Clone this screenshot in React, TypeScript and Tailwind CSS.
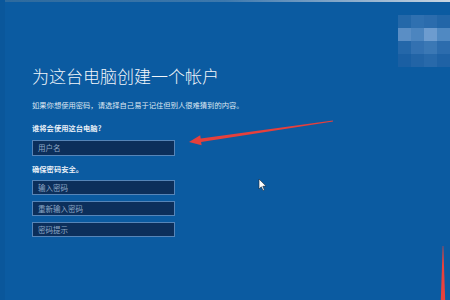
import React from "react";

const mosaic = [
  ["#2468a9", "#2f70b0", "#2b6cad", "#2266a8"],
  ["#5a8ec5", "#4c85bf", "#6d9ccf", "#5089c2"],
  ["#2467a9", "#3371b1", "#3b78b5", "#2c6cad"],
  ["#1a5fa3", "#2264a6", "#2869aa", "#1f62a5"],
];

const Field = ({ text, first }: { text: string; first?: boolean }) => (
  <div
    className={`w-[143px] ${first ? "h-[16px]" : "h-[15px]"} bg-[#0c2f5b] border border-[#5685b8] flex items-center pl-[5px] text-[7.5px] leading-none text-[#8fa8c6]`}
  >
    {text}
  </div>
);

export default function App() {
  return (
    <div className="relative w-[450px] h-[300px] overflow-hidden bg-[#0b5ba1] font-['Noto_Sans_CJK_SC',sans-serif] text-white">
      {/* top edge */}
      <div className="absolute top-0 left-0 right-0 h-[2px] bg-gradient-to-r from-[#2d6a9e] via-[#3c78ad] to-[#c9d6e2]" />
      <div className="absolute top-0 bottom-0 left-0 w-[5px] bg-[#0a579b]" />

      <div className="flex flex-col pl-[32px] pt-[66px]">
        <h1 className="text-[17px] leading-[20px] font-light text-[#f2f6fa]">为这台电脑创建一个帐户</h1>
        <p className="mt-[14px] text-[7.3px] leading-[10px] text-[#dde7f2]">
          如果你想使用密码，请选择自己易于记住但别人很难猜到的内容。
        </p>
        <p className="mt-[13px] text-[7.3px] leading-[10px] font-bold text-[#e8eff7]">谁将会使用这台电脑?</p>
        <div className="mt-[7px]">
          <Field text="用户名" first />
        </div>
        <p className="mt-[8px] text-[7.3px] leading-[10px] font-bold text-[#e8eff7]">确保密码安全。</p>
        <div className="mt-[6px] flex flex-col gap-[6px]">
          <Field text="输入密码" />
          <Field text="重新输入密码" />
          <Field text="密码提示" />
        </div>
      </div>

      {/* pixelated corner */}
      <div className="absolute left-[398px] top-[15px] grid grid-cols-4">
        {mosaic.flat().map((c, i) => (
          <div key={i} className="w-[13px] h-[13px]" style={{ backgroundColor: c }} />
        ))}
      </div>

      {/* annotation arrows and cursor */}
      <svg className="absolute inset-0" width="450" height="300" viewBox="0 0 450 300">
        <polygon
          points="332.9,120.4 200.7,138.6 200.2,135.2 189,142 201.6,145.3 201.1,142 333.1,121.6"
          fill="#e6403c"
        />
        <polygon points="442.7,246 443.3,246 445.2,300 440.8,300" fill="#e8423d" />
        <path
          d="M259 179 L259 189 L261.3 186.8 L263 190.5 L264.4 189.9 L262.8 186.3 L266 186.1 Z"
          fill="#ffffff"
          stroke="#1a2a3a"
          strokeWidth="0.6"
        />
      </svg>
    </div>
  );
}
